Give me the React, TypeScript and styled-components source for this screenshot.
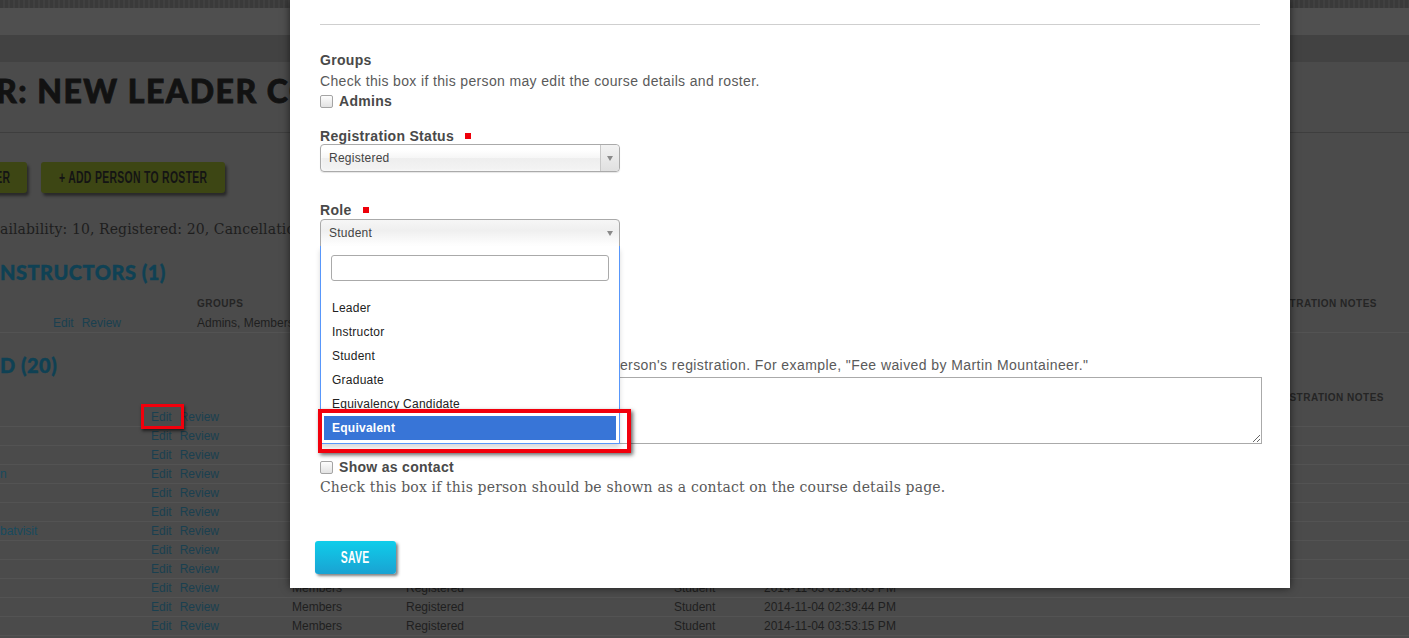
import React from 'react'
import styled, { createGlobalStyle } from 'styled-components'

const GlobalStyle = createGlobalStyle`
    html, body {
        margin: 0;
        padding: 0;
        background: #4b4b4b;
        overflow: hidden;
    }
    body {
        font-family: "Liberation Sans", Arial, sans-serif;
    }
`

const Screen = styled.div`
    position: relative;
    width: 1409px;
    height: 638px;
    overflow: hidden;
    background: #4b4b4b;
`

// the buttons use a tall condensed face; no such font is installed, so the glyphs are narrowed
const Squeezed = styled.span`
    display: inline-block;
    white-space: nowrap;
    transform: scaleX(0.65);
`

/* ---------- dimmed roster page behind the dialog ---------- */

const BackPage = styled.div`
    display: flex;
    flex-direction: column;
`

const Band = styled.div<{ $h: number; $bg: string }>`
    height: ${(p) => p.$h}px;
    background: ${(p) => p.$bg};
`

const TitleBar = styled.header`
    height: 70px;
    border-bottom: 1px solid #3e3e3e;
    overflow: hidden;
`

const PageTitle = styled.h1`
    margin: 9px 0 0 -4px;
    font: 900 32px/40px Lato, "Liberation Sans", sans-serif;
    letter-spacing: 1.5px;
    -webkit-text-stroke: 0.8px #121212;
    color: #121212;
    white-space: nowrap;
`

const ButtonRow = styled.div`
    display: flex;
    gap: 14px;
    margin: 29px 0 0 -88px;
`

const OliveButton = styled.span<{ $w: number }>`
    width: ${(p) => p.$w}px;
    height: 31px;
    display: flex;
    align-items: center;
    justify-content: center;
    background: #3d4614;
    border-radius: 3px;
    box-shadow: 2px 3px 3px rgba(0, 0, 0, 0.45);
    font: bold 16px "Liberation Sans", Arial, sans-serif;
    letter-spacing: 0.5px;
    color: #141414;
`

const Summary = styled.p`
    margin: 26px 0 0;
    font: 14px/20px "DejaVu Serif", "Liberation Serif", serif;
    letter-spacing: 0.1px;
    color: #1e1e1e;
    white-space: nowrap;
`

const SectionHeading = styled.h2<{ $mt: number }>`
    margin: ${(p) => p.$mt}px 0 0;
    font: 900 20px/24px Lato, "Liberation Sans", sans-serif;
    letter-spacing: 0.5px;
    -webkit-text-stroke: 0.4px #0f4154;
    color: #0f4154;
    white-space: nowrap;
`

const Table = styled.div<{ $mt: number }>`
    margin-top: ${(p) => p.$mt}px;
    display: flex;
    flex-direction: column;
`

const HeadRow = styled.div<{ $cols: string }>`
    display: grid;
    grid-template-columns: ${(p) => p.$cols};
    height: 22px;
    align-items: center;
`

const HeadCell = styled.span`
    font: bold 10px "Liberation Sans", Arial, sans-serif;
    letter-spacing: 0.5px;
    text-transform: uppercase;
    color: #252525;
    white-space: nowrap;
`

const BodyRow = styled.div<{ $cols: string }>`
    display: grid;
    grid-template-columns: ${(p) => p.$cols};
    height: 18px;
    align-items: center;
    border-bottom: 1px solid #535353;
    font-size: 12px;
    color: #1f1f1f;
    white-space: nowrap;
`

const Actions = styled.span`
    display: flex;
    gap: 8px;
`

const RowLink = styled.span`
    color: #1a4050;
`

const NameLink = styled.span`
    color: #174a5e;
`

const MarkedLink = styled(RowLink)`
    position: relative;
    &::after {
        content: '';
        position: absolute;
        left: -10px;
        right: -12px;
        top: -6px;
        bottom: -5px;
        border: 3px solid #f2000c;
        box-shadow: 1px 2px 3px rgba(0, 0, 0, 0.6);
    }
`

/* ---------- edit dialog ---------- */

const Dialog = styled.div`
    position: absolute;
    left: 290px;
    top: 0;
    width: 1000px;
    height: 588px;
    box-sizing: border-box;
    padding: 0 30px;
    background: #fff;
    box-shadow: 0 0 8px rgba(0, 0, 0, 0.6);
    display: flex;
    flex-direction: column;
    align-items: flex-start;
`

const Rule = styled.hr`
    align-self: stretch;
    margin: 24px 0 0;
    height: 0;
    border: 0;
    border-top: 1px solid #cfcfcf;
`

const FieldLabel = styled.div<{ $mt: number }>`
    margin-top: ${(p) => p.$mt}px;
    display: flex;
    align-items: center;
    font: bold 14px/18px "Liberation Sans", Arial, sans-serif;
    letter-spacing: 0.3px;
    color: #494949;
`

const Required = styled.span`
    width: 6px;
    height: 6px;
    margin-left: 11px;
    background: #ee000a;
`

const Help = styled.div<{ $mt?: number; $ls?: number }>`
    margin-top: ${(p) => p.$mt ?? 0}px;
    font: 14px/20px "Liberation Sans", Arial, sans-serif;
    letter-spacing: ${(p) => p.$ls ?? 0.35}px;
    color: #5a5a5a;
    white-space: nowrap;
`

const SerifHelp = styled.div`
    font: 14px/20px "DejaVu Serif", "Liberation Serif", serif;
    letter-spacing: 0.15px;
    color: #5a5a5a;
    white-space: nowrap;
`

const CheckRow = styled.label<{ $mt?: number }>`
    margin-top: ${(p) => p.$mt ?? 0}px;
    height: 20px;
    display: flex;
    align-items: center;
    gap: 6px;
    font: bold 14px "Liberation Sans", Arial, sans-serif;
    letter-spacing: 0.3px;
    color: #494949;
`

const Box = styled.span`
    width: 11px;
    height: 11px;
    border: 1px solid #a4a4a4;
    border-radius: 2px;
    background: linear-gradient(#fdfdfd, #e2e2e2);
`

const Select = styled.div<{ $open?: boolean; $mt: number }>`
    position: relative;
    margin-top: ${(p) => p.$mt}px;
    width: 300px;
    height: 28px;
    box-sizing: border-box;
    padding-left: 8px;
    display: flex;
    align-items: center;
    border: 1px solid #aaa;
    border-radius: ${(p) => (p.$open ? '4px 4px 0 0' : '4px')};
    background: ${(p) =>
        p.$open
            ? 'linear-gradient(to top, #fff 0%, #efefef 60%, #f6f6f6 100%)'
            : 'linear-gradient(to bottom, #fff 20%, #f6f6f6 50%, #eee 52%, #f4f4f4 100%)'};
    box-shadow: ${(p) => (p.$open ? 'none' : '0 0 3px #fff inset, 0 1px 1px rgba(0,0,0,.1)')};
    font: 12px "Liberation Sans", Arial, sans-serif;
    letter-spacing: 0.25px;
    color: #444;
`

const SelectValue = styled.span`
    flex: 1;
`

const ArrowCell = styled.span<{ $open?: boolean }>`
    width: 18px;
    align-self: stretch;
    display: flex;
    align-items: center;
    justify-content: center;
    border-left: 1px solid ${(p) => (p.$open ? 'transparent' : '#c8c8c8')};
    border-radius: 0 4px 4px 0;
    background: ${(p) => (p.$open ? 'transparent' : 'linear-gradient(#f2f2f2, #e0e0e0)')};
    &::before {
        content: '';
        border-left: 3.5px solid transparent;
        border-right: 3.5px solid transparent;
        border-top: 5px solid #8a8a8a;
    }
`

const DropPanel = styled.div`
    position: absolute;
    top: 26px;
    left: -1px;
    width: 300px;
    height: 198px;
    box-sizing: border-box;
    border: 1px solid #5897fb;
    border-top: 0;
    background: #fff;
    box-shadow: 0 4px 5px rgba(0, 0, 0, 0.15);
    z-index: 2;
    display: flex;
    flex-direction: column;
`

const SearchField = styled.div`
    margin: 9px 10px 0;
    height: 26px;
    flex-shrink: 0;
    box-sizing: border-box;
    border: 1px solid #aaa;
    border-radius: 3px;
    background: #fff;
`

const OptionList = styled.ul`
    list-style: none;
    margin: 15px 3px 0;
    padding: 0;
`

const Option = styled.li<{ $active?: boolean }>`
    height: 24px;
    padding: 0 8px;
    display: flex;
    align-items: center;
    font: ${(p) => (p.$active ? 'bold' : 'normal')} 12px "Liberation Sans", Arial, sans-serif;
    letter-spacing: 0.25px;
    color: ${(p) => (p.$active ? '#fff' : '#222')};
    background: ${(p) => (p.$active ? '#3875d7' : 'transparent')};
`

const Callout = styled.div`
    position: absolute;
    left: -3px;
    top: 163px;
    width: 313px;
    height: 44px;
    box-sizing: border-box;
    border: 4px solid #f2000c;
    box-shadow: 2px 2px 4px rgba(0, 0, 0, 0.6);
`

const NotesBox = styled.textarea`
    margin-top: 2px;
    width: 942px;
    height: 67px;
    box-sizing: border-box;
    border: 1px solid #aaa;
    resize: both;
    font: 13px "Liberation Sans", Arial, sans-serif;
`

const SaveButton = styled.button`
    margin: 44px 0 0 -5px;
    width: 81px;
    height: 33px;
    padding: 0;
    border: 0;
    border-radius: 3px;
    display: flex;
    align-items: center;
    justify-content: center;
    background: linear-gradient(#0fcdea, #1aa2d2);
    box-shadow: 2px 2px 3px rgba(0, 0, 0, 0.5);
    font: bold 16px "Liberation Sans", Arial, sans-serif;
    letter-spacing: 0.5px;
    color: #fff;
`

const instructorCols = '53px 144px 1fr 153px'
const registeredCols = '151px 141px 114px 268px 90px 499px 1fr'

const registered = [
    { name: '', date: '2014-10-21 10:02:11 AM' },
    { name: '', date: '2014-10-21 11:45:37 AM' },
    { name: '', date: '2014-10-22 08:13:52 AM' },
    { name: 'n', date: '2014-10-23 04:21:09 PM' },
    { name: '', date: '2014-10-24 09:30:44 AM' },
    { name: '', date: '2014-10-27 12:02:18 PM' },
    { name: 'batvisit', date: '2014-10-28 07:55:26 PM' },
    { name: '', date: '2014-10-30 02:14:03 PM' },
    { name: '', date: '2014-11-01 10:47:51 AM' },
    { name: '', date: '2014-11-03 01:53:03 PM' },
    { name: '', date: '2014-11-04 02:39:44 PM' },
    { name: '', date: '2014-11-04 03:53:15 PM' },
]

const roles = ['Leader', 'Instructor', 'Student', 'Graduate', 'Equivalency Candidate', 'Equivalent']

export default function App() {
    return (
        <Screen>
            <GlobalStyle />
            <BackPage>
                <Band $h={8} $bg="repeating-linear-gradient(90deg, #3a3a3a 0 3px, #404040 3px 5px)" />
                <Band $h={27} $bg="#4f4f4f" />
                <Band $h={27} $bg="#424242" />
                <TitleBar>
                    <PageTitle>R: NEW LEADER COURSE</PageTitle>
                </TitleBar>
                <ButtonRow>
                    <OliveButton $w={115}>
                        <Squeezed>EMAIL ROSTER</Squeezed>
                    </OliveButton>
                    <OliveButton $w={184}>
                        <Squeezed>+ ADD PERSON TO ROSTER</Squeezed>
                    </OliveButton>
                </ButtonRow>
                <Summary>ailability: 10, Registered: 20, Cancellations: 0, Waitlist: 0</Summary>

                <SectionHeading $mt={21}>NSTRUCTORS (1)</SectionHeading>
                <Table $mt={8}>
                    <HeadRow $cols={instructorCols}>
                        <span />
                        <span />
                        <HeadCell>Groups</HeadCell>
                        <HeadCell>Registration Notes</HeadCell>
                    </HeadRow>
                    <BodyRow $cols={instructorCols}>
                        <span />
                        <Actions>
                            <RowLink>Edit</RowLink>
                            <RowLink>Review</RowLink>
                        </Actions>
                        <span>Admins, Members</span>
                        <span />
                    </BodyRow>
                </Table>

                <SectionHeading $mt={20}>D (20)</SectionHeading>
                <Table $mt={9}>
                    <HeadRow $cols={registeredCols}>
                        <span />
                        <span />
                        <HeadCell>Groups</HeadCell>
                        <HeadCell>Status</HeadCell>
                        <HeadCell>Role</HeadCell>
                        <HeadCell>Registered On</HeadCell>
                        <HeadCell>Registration Notes</HeadCell>
                    </HeadRow>
                    {registered.map((r, i) => (
                        <BodyRow key={i} $cols={registeredCols}>
                            <NameLink>{r.name}</NameLink>
                            <Actions>
                                {i === 0 ? <MarkedLink>Edit</MarkedLink> : <RowLink>Edit</RowLink>}
                                <RowLink>Review</RowLink>
                            </Actions>
                            <span>Members</span>
                            <span>Registered</span>
                            <span>Student</span>
                            <span>{r.date}</span>
                            <span />
                        </BodyRow>
                    ))}
                </Table>
            </BackPage>

            <Dialog>
                <Rule />
                <FieldLabel $mt={26}>Groups</FieldLabel>
                <Help $mt={2}>Check this box if this person may edit the course details and roster.</Help>
                <CheckRow>
                    <Box />
                    Admins
                </CheckRow>

                <FieldLabel $mt={16}>
                    Registration Status
                    <Required />
                </FieldLabel>
                <Select $mt={-1}>
                    <SelectValue>Registered</SelectValue>
                    <ArrowCell />
                </Select>

                <FieldLabel $mt={29}>
                    Role
                    <Required />
                </FieldLabel>
                <Select $mt={0} $open>
                    <SelectValue>Student</SelectValue>
                    <ArrowCell $open />
                    <DropPanel>
                        <SearchField />
                        <OptionList>
                            {roles.map((r) => (
                                <Option key={r} $active={r === 'Equivalent'}>
                                    {r}
                                </Option>
                            ))}
                        </OptionList>
                        <Callout />
                    </DropPanel>
                </Select>

                <FieldLabel $mt={84}>Registration Notes</FieldLabel>
                <Help $mt={6} $ls={0.42}>
                    Use this field to record any notes about this person's registration. For example, "Fee waived by Martin Mountaineer."
                </Help>
                <NotesBox />

                <CheckRow $mt={13}>
                    <Box />
                    Show as contact
                </CheckRow>
                <SerifHelp>Check this box if this person should be shown as a contact on the course details page.</SerifHelp>

                <SaveButton>
                    <Squeezed>SAVE</Squeezed>
                </SaveButton>
            </Dialog>
        </Screen>
    )
}
